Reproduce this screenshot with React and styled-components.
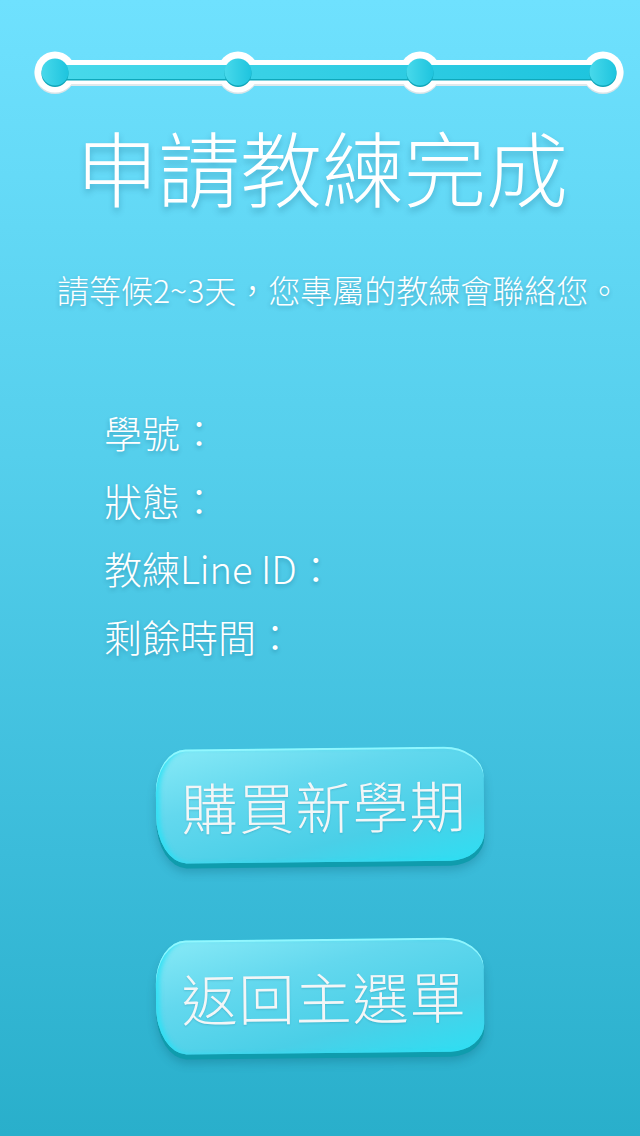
import React from 'react'
import styled, { createGlobalStyle } from 'styled-components'

const GlobalStyle = createGlobalStyle`
  html, body {
    margin: 0;
    padding: 0;
  }
  body {
    font-family: "Noto Sans CJK TC", "Noto Sans", sans-serif;
  }
`

const infoRows = ['學號：', '狀態：', '教練Line ID：', '剩餘時間：']
const steps = [55, 238, 420, 603]

function Stepper() {
    return (
        <StepperSvg viewBox="0 0 640 48" width="640" height="48">
            <defs>
                <linearGradient id="bar" x1="0" x2="1" y1="0" y2="0">
                    <stop offset="0" stopColor="#48d9eb" />
                    <stop offset="1" stopColor="#1ec4de" />
                </linearGradient>
            </defs>
            {steps.map(x => (
                <circle key={'s' + x} cx={x} cy={25.5} r={20.5} fill="#d9e4e8" />
            ))}
            <rect x={55} y={13} width={548} height={25} fill="#dfe8eb" />
            <rect x={55} y={12} width={548} height={24} fill="#fff" />
            {steps.map(x => (
                <circle key={'w' + x} cx={x} cy={24} r={20.5} fill="#fff" />
            ))}
            <rect x={55} y={18.5} width={548} height={14} fill="#0fa8bb" />
            <rect x={55} y={17} width={548} height={14} fill="url(#bar)" />
            {steps.map(x => (
                <circle key={'d' + x} cx={x} cy={25.5} r={13.5} fill="#0fa5b8" />
            ))}
            {steps.map(x => (
                <circle key={'t' + x} cx={x} cy={24} r={13.5} fill="url(#bar)" />
            ))}
        </StepperSvg>
    )
}

function App() {
    return (
        <Page>
            <GlobalStyle />
            <Stepper />
            <Title>申請教練完成</Title>
            <Subtitle>請等候2~3天，您專屬的教練會聯絡您。</Subtitle>
            <InfoList>
                {infoRows.map(row => (
                    <InfoRow key={row}>{row}</InfoRow>
                ))}
            </InfoList>
            <Actions>
                <PillowButton>購買新學期</PillowButton>
                <PillowButton>返回主選單</PillowButton>
            </Actions>
        </Page>
    )
}

export default App

const Page = styled.div`
    width: 640px;
    min-height: 1136px;
    overflow: hidden;
    background: linear-gradient(180deg, #6fe1fe 0%, #55cfec 40%, #3bbcda 75%, #29afcb 100%);
    display: flex;
    flex-direction: column;
    color: #fff;
`

const StepperSvg = styled.svg`
    display: block;
    margin-top: 48px;
`

const Title = styled.h1`
    margin: 22px 0 0;
    padding-left: 4px;
    font-size: 82px;
    line-height: 96px;
    font-weight: 300;
    text-align: center;
    text-shadow: 0 4px 6px rgba(0, 70, 100, 0.28);
`

const Subtitle = styled.p`
    margin: 55px 0 0;
    padding-left: 57px;
    font-size: 32px;
    line-height: 40px;
    font-weight: 300;
    white-space: nowrap;
    text-shadow: 0 2px 4px rgba(0, 70, 100, 0.3);
`

const InfoList = styled.div`
    margin-top: 89px;
    padding-left: 104px;
    display: flex;
    flex-direction: column;
`

const InfoRow = styled.div`
    font-size: 38px;
    line-height: 68px;
    font-weight: 300;
    white-space: nowrap;
    text-shadow: 0 2px 4px rgba(0, 70, 100, 0.3);
`

const Actions = styled.div`
    margin-top: 78px;
    display: flex;
    flex-direction: column;
    align-items: center;
    gap: 77px;
`

const PillowButton = styled.button`
    width: 328px;
    height: 114px;
    padding: 0 0 0 8px;
    border: none;
    cursor: pointer;
    font-family: "Noto Sans CJK TC", "Noto Sans", sans-serif;
    font-size: 56px;
    font-weight: 300;
    line-height: 1;
    letter-spacing: 1px;
    color: #f3f6f7;
    text-shadow: 0 1px 2px rgba(0, 80, 110, 0.2);
    border-radius: 30px 40px 34px 30px / 44px 30px 28px 48px;
    background: linear-gradient(165deg, #88eaf7 0%, #63d8ee 35%, #4acfe7 70%, #2edff3 100%);
    box-shadow:
        inset 0 2px 0 rgba(150, 248, 255, 0.9),
        inset 4px 0 4px rgba(40, 225, 245, 0.8),
        0 5px 0 #0f9cad,
        0 9px 10px rgba(0, 70, 90, 0.25);
    transform: rotate(-0.6deg);
`
